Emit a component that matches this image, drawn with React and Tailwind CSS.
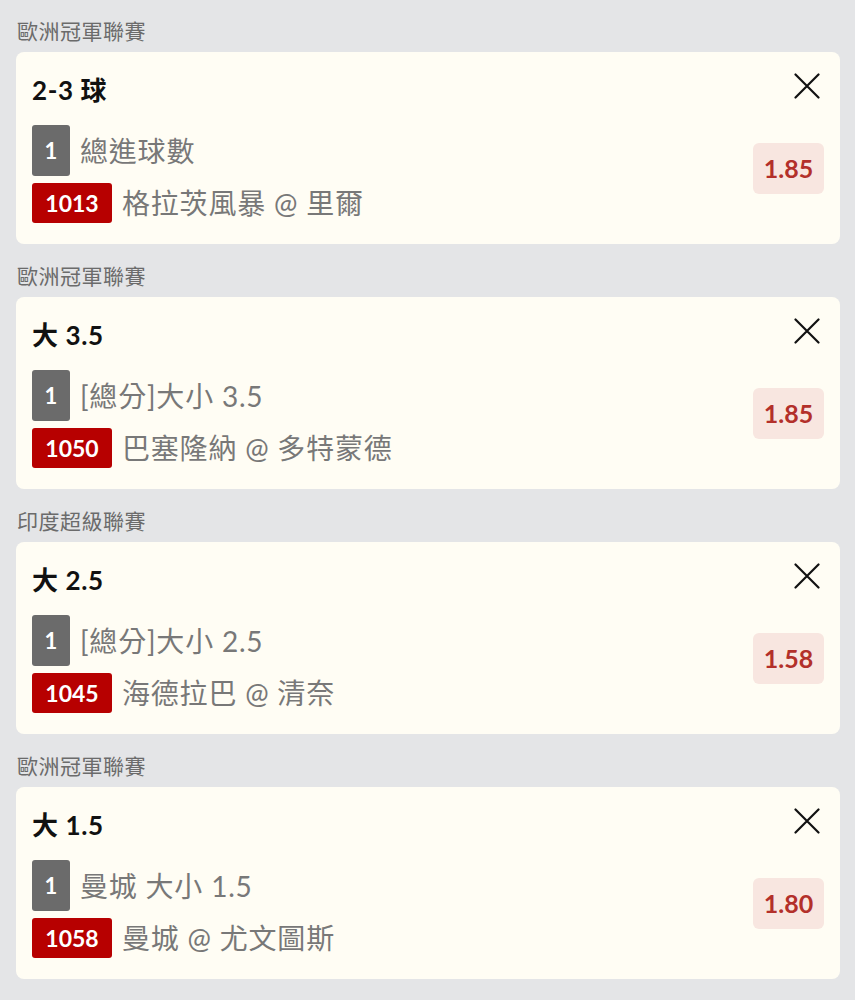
import React from "react";

const bets = [
  {
    league: "歐洲冠軍聯賽",
    pick: "2-3 球",
    market: "總進球數",
    code: "1013",
    match: "格拉茨風暴 @ 里爾",
    odds: "1.85",
  },
  {
    league: "歐洲冠軍聯賽",
    pick: "大 3.5",
    market: "[總分]大小 3.5",
    code: "1050",
    match: "巴塞隆納 @ 多特蒙德",
    odds: "1.85",
  },
  {
    league: "印度超級聯賽",
    pick: "大 2.5",
    market: "[總分]大小 2.5",
    code: "1045",
    match: "海德拉巴 @ 清奈",
    odds: "1.58",
  },
  {
    league: "歐洲冠軍聯賽",
    pick: "大 1.5",
    market: "曼城 大小 1.5",
    code: "1058",
    match: "曼城 @ 尤文圖斯",
    odds: "1.80",
  },
];

const CloseIcon = () => (
  <svg width="26" height="26" viewBox="0 0 26 26" fill="none">
    <path d="M1.5 1.5 L24.5 24.5 M24.5 1.5 L1.5 24.5" stroke="#111" strokeWidth="2.2" strokeLinecap="round" />
  </svg>
);

const BetCard = ({ bet }) => (
  <div className="h-[192px] rounded-[8px] bg-[#fffdf4] px-[16px] pt-[22px]">
    <div className="flex items-start justify-between">
      <p className="text-[26px] leading-[32px] font-bold tracking-[0.6px] text-[#111]">{bet.pick}</p>
      <button className="mr-[4px] -mt-[1px]" aria-label="Remove">
        <CloseIcon />
      </button>
    </div>
    <div className="flex justify-between mt-[19px]">
      <div className="flex flex-col gap-[7px]">
        <div className="flex items-center">
          <span className="h-[51px] w-[38px] rounded-[3px] bg-[#6b6b6b] text-white text-[22px] font-bold flex items-center justify-center">
            1
          </span>
          <span className="ml-[10px] text-[28px] leading-[34px] tracking-[0.8px] text-[#787878]">{bet.market}</span>
        </div>
        <div className="flex items-center">
          <span className="h-[40px] w-[80px] rounded-[3px] bg-[#b70000] text-white text-[23px] font-bold flex items-center justify-center">
            {bet.code}
          </span>
          <span className="ml-[10px] text-[28px] leading-[34px] tracking-[0.8px] text-[#787878]">{bet.match}</span>
        </div>
      </div>
      <div className="self-start mt-[18px] h-[51px] w-[71px] rounded-[6px] bg-[#f8e6e0] flex items-center justify-center text-[25px] font-bold text-[#b3302a]">
        {bet.odds}
      </div>
    </div>
  </div>
);

export default function App() {
  return (
    <div
      className="min-h-screen bg-[#e4e5e7] px-[16px] pt-[20px]"
      style={{ fontFamily: 'Lato, "Noto Sans CJK TC", sans-serif' }}
    >
      <div className="flex flex-col gap-[21px] w-[824px]">
        {bets.map((bet, i) => (
          <section key={i}>
            <p className="pl-[1px] text-[21px] leading-[22px] tracking-[0.5px] text-[#6b6b6b] mb-[10px]">{bet.league}</p>
            <BetCard bet={bet} />
          </section>
        ))}
      </div>
    </div>
  );
}
